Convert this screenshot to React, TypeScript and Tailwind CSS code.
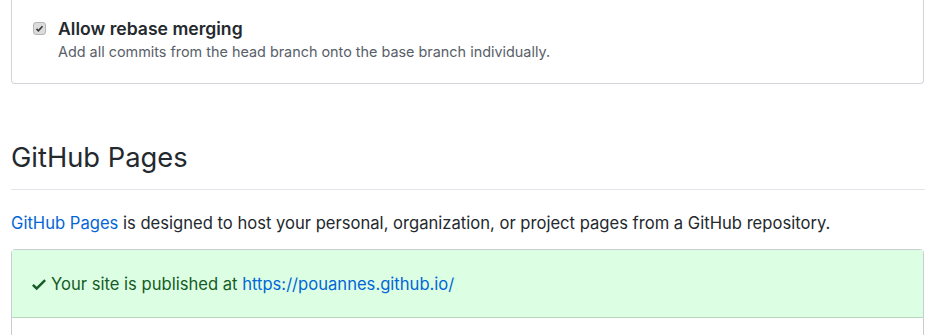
import React from "react";

function CheckMark() {
  return (
    <svg viewBox="0 0 12 16" className="w-[14px] h-[19px] fill-current" aria-hidden="true">
      <path fillRule="evenodd" d="M12 5l-8 8-4-4 1.5-1.5L4 10l6.5-6.5L12 5z" />
    </svg>
  );
}

export default function App() {
  return (
    <div
      className="w-[936px] h-[335px] overflow-hidden bg-white text-[#24292e]"
      style={{ fontFamily: 'Inter, "Liberation Sans", Arial, sans-serif' }}
    >
      {/* merge options box (top clipped) */}
      <div className="mx-[11px] w-[913px] h-[84px] border border-t-0 border-[#d1d5da] rounded-b-[4px] pl-[21px] pt-[18px]">
        <div className="flex items-start gap-[12px]">
          <div className="mt-[4px] w-[13px] h-[13px] rounded-[3px] bg-[#dcdcdc] border border-[#b5b5b5] flex items-center justify-center text-[#3a3a3a]">
            <svg viewBox="0 0 12 12" className="w-[9px] h-[9px]" aria-hidden="true">
              <path d="M2 6.5l2.5 2.5L10 3" fill="none" stroke="currentColor" strokeWidth="2.2" />
            </svg>
          </div>
          <div>
            <div className="text-[17.6px] font-semibold leading-[22px]">Allow rebase merging</div>
            <div className="text-[14.4px] text-[#586069] leading-[20px] mt-[2px]">
              Add all commits from the head branch onto the base branch individually.
            </div>
          </div>
        </div>
      </div>

      {/* GitHub Pages section */}
      <div className="px-[11px] mt-[56px]">
        <h2 className="text-[27.3px] font-normal leading-[36px] pb-[13px] border-b border-[#e1e4e8]">
          GitHub Pages
        </h2>
        <p className="text-[16.6px] leading-[24px] mt-[21px]">
          <span className="text-[#0366d6]">GitHub Pages</span> is designed to host your personal,
          organization, or project pages from a GitHub repository.
        </p>
        <div className="mt-[14px] w-[913px] border border-[#c8cdd2] rounded-t-[4px] h-[120px]">
          <div className="bg-[#dcffe4] h-[68px] border-b border-[#b7d7bd] flex items-center pl-[20px] pt-[2px] text-[#165c26] text-[16.6px]">
            <span className="mr-[5px] flex items-center">
              <CheckMark />
            </span>
            <span>
              Your site is published at{" "}
              <span className="text-[#0366d6]">https://pouannes.github.io/</span>
            </span>
          </div>
        </div>
      </div>
    </div>
  );
}
